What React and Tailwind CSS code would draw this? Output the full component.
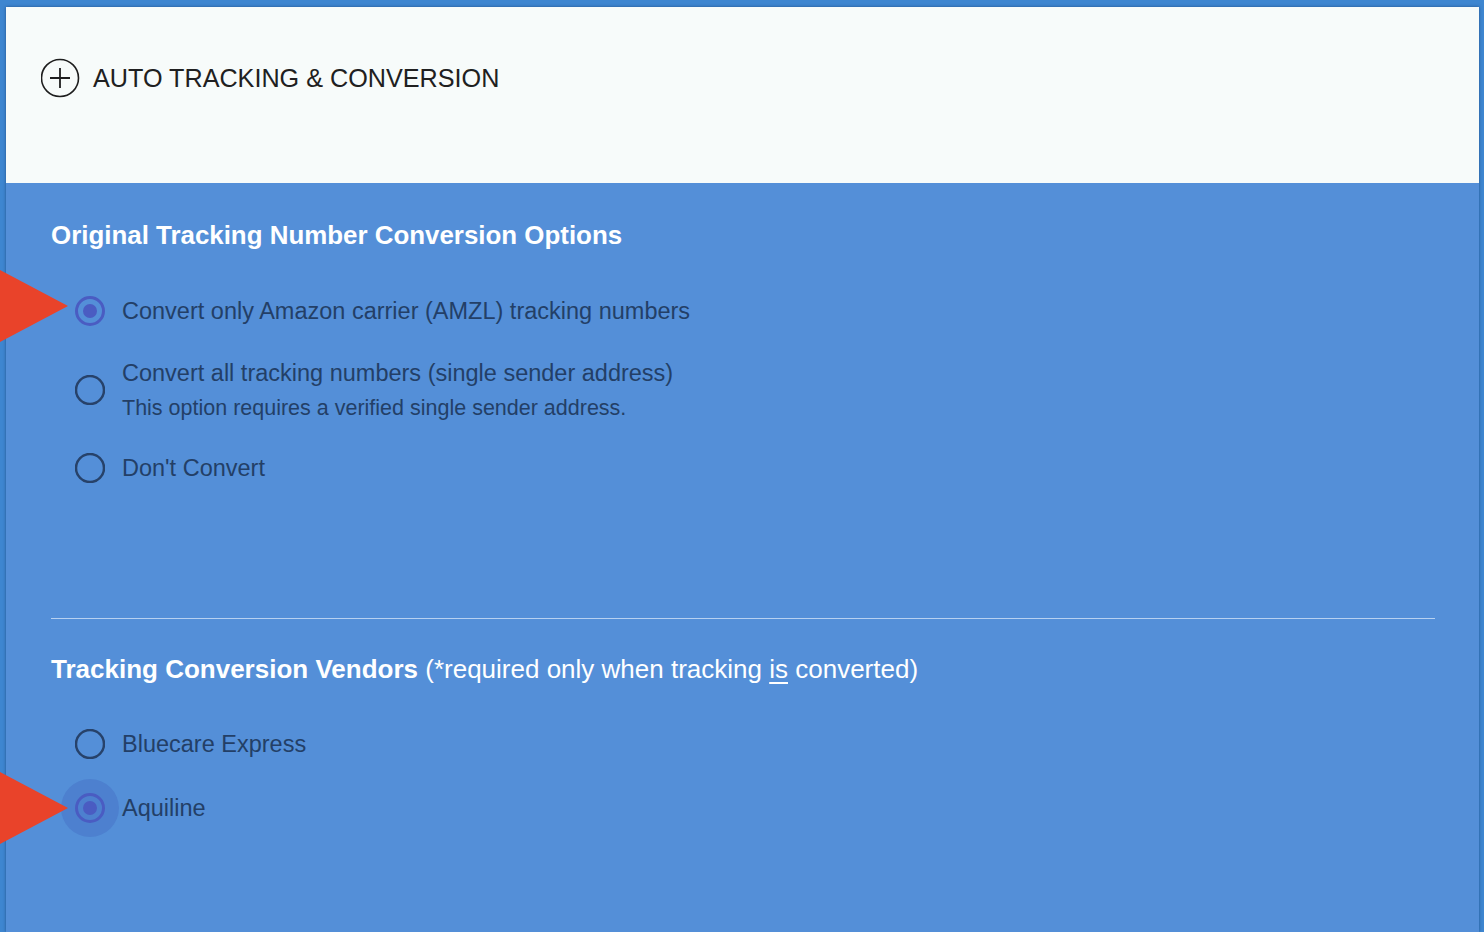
import React from "react";

const FONT = { fontFamily: '"Liberation Sans", Arial, sans-serif' };

function Radio({ checked, halo }) {
  return (
    <span className="relative flex h-[30px] w-[30px] shrink-0 items-center justify-center">
      {halo && (
        <span className="absolute left-1/2 top-1/2 h-[58px] w-[58px] -translate-x-1/2 -translate-y-1/2 rounded-full bg-[#4d80cf]" />
      )}
      <svg width="30" height="30" viewBox="0 0 30 30" className="relative">
        {checked ? (
          <>
            <circle cx="15" cy="15" r="13.5" fill="none" stroke="#4a5cc2" strokeWidth="3" />
            <circle cx="15" cy="15" r="7" fill="#4a5cc2" />
          </>
        ) : (
          <circle cx="15" cy="15" r="14" fill="none" stroke="#27426a" strokeWidth="2.5" />
        )}
      </svg>
    </span>
  );
}

function Option({ label, sub, checked, halo }) {
  return (
    <div className="flex items-center gap-[17px] pl-[24px]">
      <Radio checked={checked} halo={halo} />
      <div className="text-[#233f67]">
        <div className="text-[23.5px] leading-[30px]">{label}</div>
        {sub && <div className="mt-[7px] text-[21.5px] leading-[26px]">{sub}</div>}
      </div>
    </div>
  );
}

function Arrow({ top }) {
  return (
    <svg
      className="absolute left-0"
      style={{ top }}
      width="70"
      height="72"
      viewBox="0 0 70 72"
    >
      <polygon points="0,0 68,36 0,72" fill="#e9432a" />
    </svg>
  );
}

export default function App() {
  return (
    <div className="relative h-[932px] w-full overflow-hidden bg-[#3e86d0] pl-[6px] pr-[5px] pt-[7px]" style={FONT}>
      <div className="flex h-full flex-col shadow-[0_0_3px_rgba(20,50,100,0.6)]">
        <div className="flex h-[176px] shrink-0 items-start bg-[#f7fbfa] pl-[35px] pt-[51px]">
          <svg width="40" height="40" viewBox="0 0 40 40" className="shrink-0">
            <circle cx="19" cy="20" r="18.5" fill="none" stroke="#1e1e1e" strokeWidth="1.6" />
            <path d="M9 20h20M19 10v20" stroke="#1e1e1e" strokeWidth="1.8" />
          </svg>
          <span className="ml-[12px] text-[25.2px] leading-[40px] text-[#202020]">
            AUTO TRACKING &amp; CONVERSION
          </span>
        </div>

        <div className="flex-1 bg-[#548fd8] pl-[45px] pr-[44px] pt-[36px]">
          <h2 className="text-[25.9px] font-bold leading-[32px] text-white">
            Original Tracking Number Conversion Options
          </h2>
          <div className="mt-[45px] flex flex-col gap-[32px]">
            <Option checked label="Convert only Amazon carrier (AMZL) tracking numbers" />
            <Option
              label="Convert all tracking numbers (single sender address)"
              sub="This option requires a verified single sender address."
            />
            <Option label="Don't Convert" />
          </div>

          <div className="mt-[135px] h-px bg-[#b7d1f1]" />

          <h2 className="mt-[34px] text-[26px] leading-[32px] text-white">
            <span className="font-bold">Tracking Conversion Vendors</span>{" "}
            (*required only when tracking <span className="underline underline-offset-4">is</span> converted)
          </h2>
          <div className="mt-[44px] flex flex-col gap-[34px]">
            <Option label="Bluecare Express" />
            <Option checked halo label="Aquiline" />
          </div>
        </div>
      </div>

      <Arrow top={270} />
      <Arrow top={772} />
    </div>
  );
}
